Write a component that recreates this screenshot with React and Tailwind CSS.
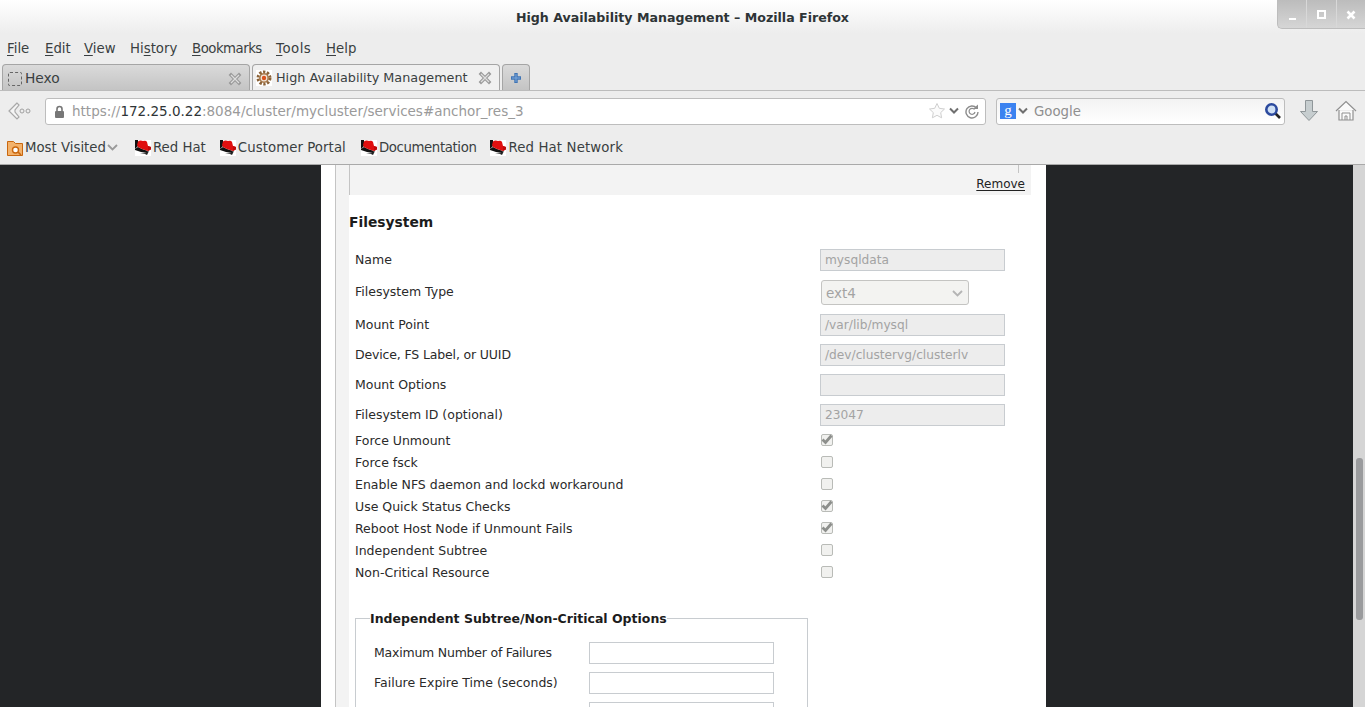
const font = { fontFamily: '"DejaVu Sans", sans-serif' };

function Mnemonic({ label, at, width, extra = "" }) {
  return (
    <div className={`shrink-0 whitespace-nowrap ${width}`}>
      <span className={extra}>
        {label.slice(0, at)}
        <span className="underline underline-offset-2">{label[at]}</span>
        {label.slice(at + 1)}
      </span>
    </div>
  );
}

function CloseX() {
  return (
    <svg width="14" height="14" viewBox="0 0 14 14" className="shrink-0">
      <path d="M3 3l8 8M11 3l-8 8" stroke="#9a9a9a" strokeWidth="3.4" strokeLinecap="square" />
      <path d="M3 3l8 8M11 3l-8 8" stroke="#dedede" strokeWidth="1.2" />
    </svg>
  );
}

function RedHatIcon() {
  return (
    <svg width="16" height="16" viewBox="0 0 16 16" className="shrink-0">
      <rect width="16" height="16" fill="#fff" />
      <path d="M0 0h3v6L0 9z" fill="#111" />
      <path d="M0 9l3-2 4 2 6 2-1 2-6-1-6-2z" fill="#111" />
      <path d="M3 1.500Q5 0 8 1q3-1 4 1l1 4 3 1v2l-3 2-6-2-4-2-1-2z" fill="#e00f0f" />
      <path d="M13 6l3 1v2.500l-3 1.500z" fill="#c00a0a" />
      <path d="M5 14l6-1 1-1 2-1-2 4-2-1z" fill="#222" />
    </svg>
  );
}

function Bookmark({ label, className = "", textClass = "" }) {
  return (
    <div className={`flex items-center ${className}`}>
      <RedHatIcon />
      <span className={`ml-[2px] ${textClass}`}>{label}</span>
    </div>
  );
}

function TextRow({ label, value, labelClass = "" }) {
  return (
    <div className="flex items-center h-[30px]">
      <span className="w-[471px] pl-[6px]">
        <span className={labelClass}>{label}</span>
      </span>
      <div className="w-[185px] h-[22px] border border-[#c8ccd0] bg-[#ededed] px-[4px] text-[12.2px] leading-[21px] text-[#a3a3a3]">
        {value}
      </div>
    </div>
  );
}

function CheckRow({ label, checked }) {
  return (
    <div className="flex items-center h-[22px]">
      <span className="w-[472px] pl-[6px]">{label}</span>
      <div className="w-[12px] h-[12px] mb-[2px] border border-[#b9bbb7] rounded-[2px] bg-[#f1f1ef] flex items-center justify-center">
        {checked && (
          <svg width="14" height="12" viewBox="0 0 14 12" className="shrink-0">
            <path d="M2.500 5.500l3 3 6-7" fill="none" stroke="#8d8f8c" strokeWidth="2.800" />
          </svg>
        )}
      </div>
    </div>
  );
}

function FieldsetRow({ label, labelClass = "" }) {
  return (
    <div className="flex items-center h-[30px]">
      <span className={`w-[215px] pt-[2px] ${labelClass}`}>{label}</span>
      <div className="w-[185px] h-[22px] border border-[#c8ccd0] bg-white" />
    </div>
  );
}

export default function App() {
  return (
    <div className="w-[1365px] h-[707px] overflow-hidden flex flex-col bg-[#ededed] text-[#2e3436]" style={font}>
      {/* title bar */}
      <div className="relative h-[34px] shrink-0 bg-gradient-to-b from-white to-[#ededed] text-center text-[12.6px] font-bold leading-[35px] text-[#2e3436]">
        High Availability Management – Mozilla Firefox
        <div className="absolute right-0 top-0 h-[29px] w-[88px] flex rounded-bl-[5px] border-b border-l border-[#bdbdbd] bg-gradient-to-b from-[#bcbcbc] to-[#d6d6d6]">
          <div className="w-[29px] flex items-end justify-center pb-[8px] border-r border-[#d8d8d8]">
            <div className="w-[7px] h-[2px] bg-white" />
          </div>
          <div className="w-[30px] flex items-center justify-center pt-[1px] border-r border-[#d8d8d8]">
            <div className="w-[9px] h-[9px] border-2 border-white" />
          </div>
          <div className="flex-1 flex items-center justify-center pt-[1px]">
            <svg width="10" height="10" viewBox="0 0 10 10">
              <path d="M1.500 1.500l7 7M8.500 1.500l-7 7" stroke="#fff" strokeWidth="2.600" />
            </svg>
          </div>
        </div>
      </div>

      {/* menu bar */}
      <div className="h-[30px] shrink-0 flex items-center pl-[7px] text-[13.3px] text-[#3a3f41]">
        <Mnemonic label="File" at={0} width="w-[38px]" />
        <Mnemonic label="Edit" at={0} width="w-[39px]" />
        <Mnemonic label="View" at={0} width="w-[46px]" />
        <Mnemonic label="History" at={2} width="w-[62px]" />
        <Mnemonic label="Bookmarks" at={0} width="w-[84px]" extra="tracking-[-0.5px]" />
        <Mnemonic label="Tools" at={0} width="w-[50px]" extra="tracking-[0.5px]" />
        <Mnemonic label="Help" at={0} width="w-[40px]" />
      </div>

      {/* tabs */}
      <div className="h-[27px] shrink-0 flex items-end pl-[2px] gap-[2px] border-b border-[#bcbcbc] text-[13.8px] text-[#3a3f41]">
        <div className="w-[248px] h-[26px] flex items-center pl-[5px] pr-[7px] pt-[2px] rounded-t-[4px] border border-b-0 border-[#a5a5a5] bg-gradient-to-b from-[#dadada] to-[#c4c4c4]">
          <div className="w-[14px] h-[14px] border border-dashed border-[#666] rounded-[2px]" />
          <span className="ml-[3px] flex-1">Hexo</span>
          <CloseX />
        </div>
        <div className="w-[248px] h-[26px] flex items-center pl-[3px] pr-[7px] pt-[1px] rounded-t-[4px] border border-b-0 border-[#a5a5a5] bg-[#f0f0f0]">
          <svg width="16" height="16" viewBox="0 0 16 16" className="shrink-0">
            <rect width="16" height="16" fill="#fff" />
            <circle cx="8" cy="8" r="6" fill="none" stroke="#8a6238" strokeWidth="3" strokeDasharray="2.300 1.500" />
            <circle cx="8" cy="8" r="5" fill="#a87a4c" />
            <circle cx="8" cy="8" r="3.400" fill="#f0e6da" />
            <circle cx="8" cy="8" r="2.200" fill="#d9531e" />
          </svg>
          <span className="ml-[4px] flex-1 whitespace-nowrap text-[12.8px]">High Availability Management</span>
          <CloseX />
        </div>
        <div className="w-[28px] h-[26px] flex items-center justify-center rounded-t-[4px] border border-b-0 border-[#a5a5a5] bg-gradient-to-b from-[#dadada] to-[#c4c4c4]">
          <svg width="12" height="12" viewBox="0 0 12 12">
            <path d="M6 1v10M1 6h10" stroke="#3f74b5" strokeWidth="3.400" />
            <path d="M6 2v8M2 6h8" stroke="#7fa8da" strokeWidth="1" />
          </svg>
        </div>
      </div>

      {/* navigation bar */}
      <div className="h-[41px] shrink-0 flex items-center pb-[1px]">
        <div className="w-[43px] pl-[7px] flex items-center shrink-0">
          <svg width="24" height="24" viewBox="0 0 24 24">
            <path d="M10 4L2 12l8 8 2-2-4-5 0-2 4-5z" fill="#f4f4f4" stroke="#a8a8a8" strokeWidth="1.200" />
            <circle cx="15" cy="12" r="2" fill="none" stroke="#a0a0a0" />
            <circle cx="21" cy="12" r="2" fill="none" stroke="#a0a0a0" />
          </svg>
        </div>
        <div className="w-[941px] h-[27px] ml-[2px] shrink-0 flex items-center pl-[8px] pr-[5px] border border-[#bdbdbd] rounded-[3px] bg-white text-[13.5px] text-[#9a9a9a]">
          <svg width="11" height="13" viewBox="0 0 11 13" className="shrink-0">
            <path d="M3 6V4a2.500 2.500 0 015 0v2" fill="none" stroke="#777" strokeWidth="1.600" />
            <rect x="1" y="6" width="9" height="7" rx="1" fill="#777" />
          </svg>
          <span className="ml-[7px] flex-1 whitespace-nowrap">
            https://<span className="text-[#2e3436]">172.25.0.22</span>:8084/cluster/mycluster/services#anchor_res_3
          </span>
          <svg width="18" height="18" viewBox="0 0 18 18" className="shrink-0">
            <path d="M9 1.500l2.300 4.800 5.200.7-3.800 3.600.9 5.200L9 13.300l-4.600 2.500.9-5.200L1.500 7l5.200-.7z" fill="#fbfbfb" stroke="#cfcfcf" />
          </svg>
          <svg width="10" height="8" viewBox="0 0 10 8" className="ml-[3px] shrink-0">
            <path d="M1 1.500l4 4 4-4" fill="none" stroke="#6f6f6f" strokeWidth="2" />
          </svg>
          <svg width="16" height="16" viewBox="0 0 16 16" className="ml-[5px] shrink-0">
            <path d="M12.500 5A6 6 0 1014 9" fill="none" stroke="#8c8c8c" strokeWidth="1.400" />
            <path d="M10.500 6.500A3 3 0 1011 9" fill="none" stroke="#8c8c8c" strokeWidth="1.200" />
            <path d="M9 6h5V1.500z" fill="#8c8c8c" />
          </svg>
        </div>
        <div className="w-[289px] h-[27px] ml-[10px] shrink-0 flex items-center pl-[3px] pr-[2px] border border-[#bdbdbd] rounded-[3px] bg-gradient-to-b from-[#f3f3f3] to-white text-[13.3px] text-[#8f8f8f]">
          <div className="w-[16px] h-[16px] bg-[#3b82f0] text-white text-center text-[15px] leading-[14px]" style={{ fontFamily: '"Liberation Serif", serif' }}>
            g
          </div>
          <svg width="10" height="8" viewBox="0 0 10 8" className="ml-[2px] shrink-0">
            <path d="M1 1.500l4 4 4-4" fill="none" stroke="#6f6f6f" strokeWidth="2" />
          </svg>
          <span className="ml-[6px] pt-[1px] flex-1">Google</span>
          <svg width="18" height="18" viewBox="0 0 18 18" className="shrink-0">
            <path d="M11 11l5 5" stroke="#222" strokeWidth="2.600" />
            <circle cx="7.500" cy="7.500" r="5.200" fill="#cfe0f5" stroke="#2c4a9e" strokeWidth="2.600" />
          </svg>
        </div>
        <svg width="20" height="24" viewBox="0 0 20 24" className="ml-[14px] shrink-0">
          <path d="M6.500 1.500h7v11h5L10 21.500 1.500 12.500h5z" fill="#c6cdcf" stroke="#8f9699" />
        </svg>
        <svg width="22" height="22" viewBox="0 0 22 22" className="ml-[16px] shrink-0">
          <path d="M1 11L11 1.500 21 11M4 10v10h14V10" fill="#fafafa" stroke="#8f8f8f" strokeWidth="1.200" />
          <path d="M7 20v-7h8v7M10 20v-4h2v4" fill="none" stroke="#8f8f8f" />
        </svg>
      </div>

      {/* bookmarks bar */}
      <div className="h-[33px] shrink-0 flex items-center pl-[7px] pb-[1px] text-[13.3px] text-[#3a3f41] border-b border-[#a9a9a9]">
        <svg width="16" height="16" viewBox="0 0 16 16" className="shrink-0">
          <path d="M.5 1.500h6l2 2h7v12H.5z" fill="#f3b26b" stroke="#c9670f" />
          <circle cx="8.500" cy="10" r="3" fill="#fff" stroke="#c9670f" strokeWidth="1.400" />
          <path d="M11 12l3 3" stroke="#c9670f" strokeWidth="1.600" />
        </svg>
        <span className="ml-[2px]">Most Visited</span>
        <svg width="11" height="7" viewBox="0 0 11 7" className="ml-[1px] mr-[17px] shrink-0">
          <path d="M1 1l4.500 4.500L10 1" fill="none" stroke="#9a9a9a" strokeWidth="1.800" />
        </svg>
        <div className="flex items-center gap-[14px]">
          <Bookmark label="Red Hat" />
          <Bookmark label="Customer Portal" textClass="tracking-[0.07px]" />
          <Bookmark label="Documentation" className="ml-[1px]" textClass="tracking-[-0.38px]" />
          <Bookmark label="Red Hat Network" textClass="tracking-[0.13px]" />
        </div>
      </div>

      {/* page */}
      <div className="flex-1 min-h-0 flex bg-[#232527] overflow-hidden">
        <div className="ml-[321px] w-[725px] h-full shrink-0 bg-white pl-[14px] text-[12.5px] text-[#2a2a2a]">
          <div className="w-[696px] h-[600px] border-l border-[#c4c4c4] bg-[#f3f3f3] pl-[13px]">
            <div className="relative h-[30px] border-l border-[#c4c4c4] flex items-center justify-end pr-[6px] pt-[7px] text-[12px] text-[#222]">
              <div className="absolute right-[12px] top-0 h-[8px] w-px bg-[#c4c4c4]" />
              <span className="underline underline-offset-2">Remove</span>
            </div>
            <div className="bg-white h-[570px]">
              <h3 className="h-[50px] pt-[16px] text-[13.85px] font-bold leading-[22px] text-[#1c1c1c]">Filesystem</h3>
              <TextRow label="Name" value="mysqldata" />
              <div className="flex items-center h-[35px]">
                <span className="w-[471px] pl-[6px]">Filesystem Type</span>
                <div className="ml-[1px] w-[148px] h-[25px] pl-[4px] pr-[5px] pt-[1px] flex items-center justify-between border border-[#c4c4c2] rounded-[3px] bg-[#f3f3f1] text-[13.5px] text-[#a3a3a3]">
                  <span>ext4</span>
                  <svg width="11" height="7" viewBox="0 0 11 7" className="shrink-0">
                    <path d="M1 1l4.500 4.500L10 1" fill="none" stroke="#b4b4b4" strokeWidth="1.800" />
                  </svg>
                </div>
              </div>
              <TextRow label="Mount Point" value="/var/lib/mysql" />
              <TextRow label="Device, FS Label, or UUID" value="/dev/clustervg/clusterlv" labelClass="tracking-[-0.15px]" />
              <TextRow label="Mount Options" value="" />
              <TextRow label="Filesystem ID (optional)" value="23047" />
              <CheckRow label="Force Unmount" checked />
              <CheckRow label="Force fsck" />
              <CheckRow label="Enable NFS daemon and lockd workaround" />
              <CheckRow label="Use Quick Status Checks" checked />
              <CheckRow label="Reboot Host Node if Unmount Fails" checked />
              <CheckRow label="Independent Subtree" />
              <CheckRow label="Non-Critical Resource" />
              <fieldset className="mt-[25px] ml-[6px] w-[453px] border border-[#c8ccd0] pl-[18px] pt-[10px] pb-[20px]">
                <legend className="-ml-[4px] translate-y-[1px] text-[12.5px] font-bold text-[#1c1c1c]">
                  Independent Subtree/Non-Critical Options
                </legend>
                <FieldsetRow label="Maximum Number of Failures" labelClass="tracking-[-0.22px]" />
                <FieldsetRow label="Failure Expire Time (seconds)" />
                <FieldsetRow label="" />
              </fieldset>
            </div>
          </div>
        </div>
        <div className="ml-auto w-[12px] h-full shrink-0 bg-[#d5d5d5] pt-[293px] pl-[3px]">
          <div className="w-[7px] h-[162px] rounded-[3px] bg-[#9a9b9d]" />
        </div>
      </div>
    </div>
  );
}
